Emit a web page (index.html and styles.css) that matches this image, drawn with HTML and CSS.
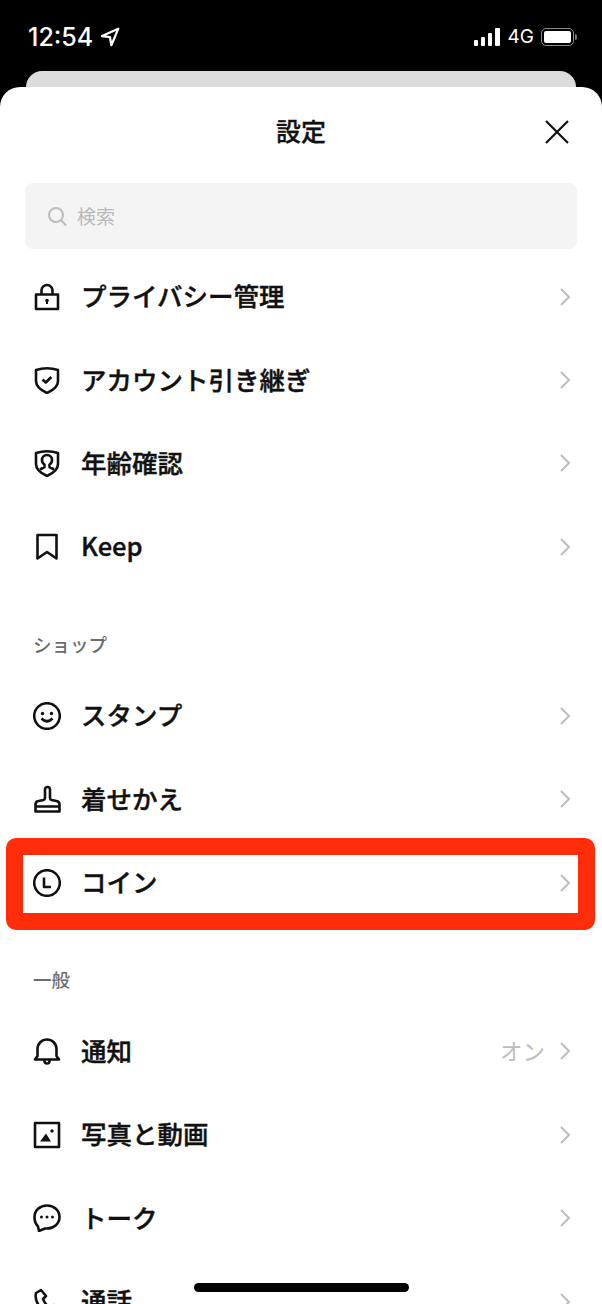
FILE: index.html
```html
<!DOCTYPE html>
<html lang="ja">
  <head>
    <meta charset="UTF-8" />
    <title>設定</title>
    <link rel="stylesheet" href="styles.css">
  </head>
  <body>
    <div class="phone">
      <!-- Status bar -->
      <div class="status-bar">
        <div class="status-left">
          <span class="clock">12:54</span>
          <svg class="arrow" width="20" height="20" viewBox="0 0 18 18"><path d="M16.500 1.500 1.800 8.200l7.200 1 1.200 7.200z" fill="none" stroke="#fff" stroke-width="2" stroke-linejoin="round"/></svg>
        </div>
        <div class="status-right">
          <div class="signal"><i class="s1"></i><i class="s2"></i><i class="s3"></i><i class="s4"></i></div>
          <span class="net">4G</span>
          <div class="battery"><div class="battery-fill"></div></div>
          <div class="battery-cap"></div>
        </div>
      </div>

      <div class="back-card"></div>

      <div class="sheet">
        <div class="sheet-head">
          <h1>設定</h1>
          <svg class="close" width="26" height="26" viewBox="0 0 26 26"><path d="M2 2l22 22M24 2 2 24" stroke="#111" stroke-width="2.200" fill="none"/></svg>
        </div>

        <div class="search">
          <svg width="21" height="21" viewBox="0 0 21 21"><circle cx="9" cy="9" r="7" fill="none" stroke="#bcbcbc" stroke-width="2"/><path d="M14 14l5 5.500" stroke="#bcbcbc" stroke-width="2" fill="none"/></svg>
          <span>検索</span>
        </div>

        <div class="list">
          <div class="row">
            <svg class="icon" viewBox="0 0 28 28"><path d="M8.500 11.500V7.500a5.500 5.500 0 0 1 11 0v4M3 11.500h22v14.500h-22z"/><circle class="dot" cx="14" cy="17.500" r="1.800"/><path class="thin" d="M14 18v3"/></svg>
            <span class="name">プライバシー管理</span>
            <svg class="chev" viewBox="0 0 12 20"><path d="M2 2l8 8-8 8"/></svg>
          </div>
          <div class="row">
            <svg class="icon" viewBox="0 0 28 28"><path d="M3 4Q14 .500 25 4V15q0 7-11 12Q3 22 3 15z"/><path d="M9.500 13.500l3.300 3 5.500-5.500"/></svg>
            <span class="name">アカウント引き継ぎ</span>
            <svg class="chev" viewBox="0 0 12 20"><path d="M2 2l8 8-8 8"/></svg>
          </div>
          <div class="row">
            <svg class="icon" viewBox="0 0 28 28"><path d="M3 4Q14 .500 25 4V15q0 7-11 12Q3 22 3 15z"/><path d="M7 20.500l4.500-2.500v-2.500q-2.500-1.500-2.500-4.500a5 5 0 0 1 10 0q0 3-2.500 4.500V18l4.500 2.500"/></svg>
            <span class="name">年齢確認</span>
            <svg class="chev" viewBox="0 0 12 20"><path d="M2 2l8 8-8 8"/></svg>
          </div>
          <div class="row">
            <svg class="icon" viewBox="0 0 28 28"><path d="M4.500 2h19v23.500l-9.500-6.500-9.500 6.500z"/></svg>
            <span class="name">Keep</span>
            <svg class="chev" viewBox="0 0 12 20"><path d="M2 2l8 8-8 8"/></svg>
          </div>

          <div class="section">ショップ</div>

          <div class="row">
            <svg class="icon" viewBox="0 0 28 28"><circle cx="14" cy="14" r="12.800"/><circle class="dot" cx="9.500" cy="11.500" r="1.700"/><circle class="dot" cx="18.500" cy="11.500" r="1.700"/><path d="M8.500 16.500q5.500 5.500 11 0"/></svg>
            <span class="name">スタンプ</span>
            <svg class="chev" viewBox="0 0 12 20"><path d="M2 2l8 8-8 8"/></svg>
          </div>
          <div class="row">
            <svg class="icon" viewBox="0 0 28 28"><path d="M2.500 26.500v-7q0-3 3-3.500l5-1q1.500-.5 1.500-2V4.500a2.500 2.500 0 0 1 5 0V13q0 1.500 1.500 2l5 1q3 .5 3 3.500v7zM2.500 21.500h23"/></svg>
            <span class="name">着せかえ</span>
            <svg class="chev" viewBox="0 0 12 20"><path d="M2 2l8 8-8 8"/></svg>
          </div>
          <div class="row row-marked">
            <svg class="icon" viewBox="0 0 28 28"><circle cx="14" cy="14" r="12.800"/><path d="M11 8.500V18h7"/></svg>
            <span class="name">コイン</span>
            <svg class="chev" viewBox="0 0 12 20"><path d="M2 2l8 8-8 8"/></svg>
            <div class="marker"></div>
          </div>

          <div class="section">一般</div>

          <div class="row">
            <svg class="icon" viewBox="0 0 28 28"><path d="M2 22.500h24l-2.500-3.500V12a9.500 9.500 0 0 0-19 0v7zM11.500 23v1a2.500 2.500 0 0 0 5 0v-1"/></svg>
            <span class="name">通知</span>
            <span class="value">オン</span>
            <svg class="chev" viewBox="0 0 12 20"><path d="M2 2l8 8-8 8"/></svg>
          </div>
          <div class="row">
            <svg class="icon" viewBox="0 0 28 28"><path d="M2 2h24v24h-24z"/><path class="solid" d="M7 20.500l6-8 5 8z"/><circle class="dot" cx="19" cy="10" r="1.700"/></svg>
            <span class="name">写真と動画</span>
            <svg class="chev" viewBox="0 0 12 20"><path d="M2 2l8 8-8 8"/></svg>
          </div>
          <div class="row">
            <svg class="icon" viewBox="0 0 28 28"><path d="M14 1.500C7 1.500 1.500 6.500 1.500 13c0 5 2 8 3.500 9.500L6 27l6-2.500h2c7 0 12.500-5 12.500-11.500S21 1.500 14 1.500z"/><circle class="dot" cx="8.500" cy="13" r="1.500"/><circle class="dot" cx="14" cy="13" r="1.500"/><circle class="dot" cx="19.500" cy="13" r="1.500"/></svg>
            <span class="name">トーク</span>
            <svg class="chev" viewBox="0 0 12 20"><path d="M2 2l8 8-8 8"/></svg>
          </div>
          <div class="row">
            <svg class="icon" viewBox="0 0 28 28"><path d="M8 2 3 5q-2 9 7 17t15 5l2-5-6-5-3 3q-5-2-8-9l3-3z"/></svg>
            <span class="name">通話</span>
            <svg class="chev" viewBox="0 0 12 20"><path d="M2 2l8 8-8 8"/></svg>
          </div>
        </div>
      </div>

      <div class="home-bar"></div>
    </div>
  </body>
</html>
```

FILE: styles.css
```css
html,
body {
  margin: 0;
  padding: 0;
  background: #000;
}

.phone {
  position: relative;
  width: 602px;
  height: 1304px;
  overflow: hidden;
  background: #000;
  font-family: "Noto Sans CJK JP", "Noto Sans", sans-serif;
}

/* Status bar */
.status-bar {
  height: 71px;
  box-sizing: border-box;
  padding: 22px 25px 0 28px;
  display: flex;
  justify-content: space-between;
  align-items: flex-start;
  color: #fff;
}

.status-left {
  display: flex;
  align-items: center;
  gap: 7px;
  height: 30px;
}

.clock {
  font-family: Inter, Roboto, sans-serif;
  font-size: 25px;
  font-weight: 500;
  line-height: 30px;
}

.status-right {
  display: flex;
  align-items: center;
  height: 30px;
}

.signal {
  display: flex;
  align-items: flex-end;
  gap: 2.500px;
  height: 18px;
  margin-right: 8px;
}

.signal i {
  display: block;
  width: 4.600px;
  background: #fff;
  border-radius: 1px;
}

.s1 { height: 6px; }
.s2 { height: 9px; }
.s3 { height: 13px; }
.s4 { height: 18px; }

.net {
  font-family: Inter, Roboto, sans-serif;
  font-size: 19px;
  line-height: 30px;
  margin-right: 7px;
}

.battery {
  width: 33px;
  height: 18px;
  box-sizing: border-box;
  border: 1.500px solid #8a8a8a;
  border-radius: 5px;
  padding: 2px;
}

.battery-fill {
  height: 100%;
  background: #fff;
  border-radius: 2px;
}

.battery-cap {
  width: 2px;
  height: 6px;
  margin-left: 1px;
  background: #777;
  border-radius: 0 2px 2px 0;
}

.back-card {
  height: 30px;
  margin: 0 26px;
  background: #dcdcdc;
  border-radius: 16px 16px 0 0;
}

/* Sheet */
.sheet {
  position: absolute;
  top: 87px;
  left: 0;
  right: 0;
  bottom: 0;
  background: #fff;
  border-radius: 20px 20px 0 0;
}

.sheet-head {
  position: relative;
  height: 96px;
  display: flex;
  justify-content: center;
  align-items: flex-start;
}

.sheet-head h1 {
  margin: 25px 0 0;
  font-size: 25px;
  font-weight: 500;
  -webkit-text-stroke: 0.3px #111;
  line-height: 36px;
  color: #111;
}

.close {
  position: absolute;
  top: 32px;
  right: 32px;
}

.search {
  margin: 0 25px;
  height: 66px;
  padding-left: 22px;
  display: flex;
  align-items: center;
  gap: 9px;
  background: #f4f4f4;
  border-radius: 8px;
  color: #b9b9b9;
  font-size: 19px;
}

.search span {
  padding-bottom: 2px;
}

.list {
  padding-top: 6px;
}

.row {
  position: relative;
  height: 83.400px;
  padding: 0 32px 0 32.500px;
  display: flex;
  align-items: center;
}

.icon {
  width: 28px;
  height: 28px;
  margin-right: 23px;
  flex-shrink: 0;
  fill: none;
  stroke: #111;
  stroke-width: 2.600;
  stroke-linejoin: round;
}

.icon .dot,
.icon .solid {
  fill: #111;
  stroke: none;
}

.icon .thin {
  stroke-width: 2;
}

.name {
  flex: 1;
  padding-bottom: 3px;
  margin-left: -2.500px;
  font-size: 25.500px;
  font-weight: 500;
  -webkit-text-stroke: 0.4px #111;
  color: #111;
  line-height: 36px;
}

.value {
  margin-right: 14px;
  padding-bottom: 3px;
  font-size: 22.500px;
  color: #bdbdbd;
}

.chev {
  width: 12px;
  height: 20px;
  margin-right: -1px;
  fill: none;
  stroke: #bdbdbd;
  stroke-width: 2;
}

.section {
  height: 36px;
  margin: 37px 0 12.500px;
  padding-left: 33px;
  font-size: 18.500px;
  font-weight: 500;
  line-height: 36px;
  color: #6c6c6c;
}

/* red highlight on the coin row */
.marker {
  position: absolute;
  top: -3px;
  bottom: -6px;
  left: 6px;
  right: 7px;
  border: 17px solid #ff2d0a;
  border-radius: 10px;
}

.home-bar {
  position: absolute;
  left: 194px;
  bottom: 12px;
  width: 215px;
  height: 9px;
  background: #000;
  border-radius: 5px;
}
```
